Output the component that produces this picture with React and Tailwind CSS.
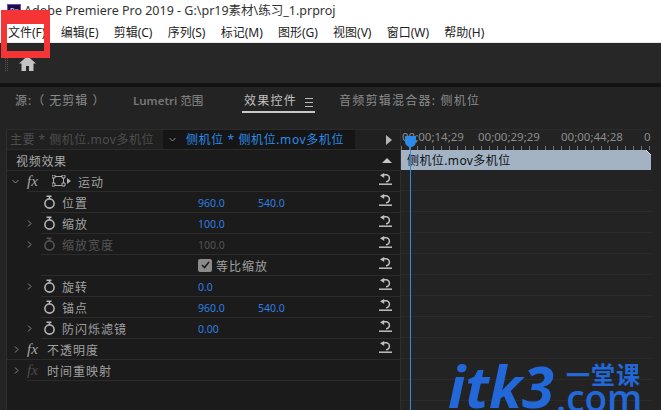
import React from "react";

const menus = ["文件(F)", "编辑(E)", "剪辑(C)", "序列(S)", "标记(M)", "图形(G)", "视图(V)", "窗口(W)", "帮助(H)"];

const Stopwatch = ({ dim }) => (
  <svg width="14" height="15" viewBox="0 0 14 15" fill="none" stroke={dim ? "#555" : "#b4b4b4"} strokeWidth="1.6">
    <circle cx="6.5" cy="8.5" r="4.6" />
    <path d="M3.5 1.2h5M6.5 1.2v2.5" />
  </svg>
);

const Reset = () => (
  <svg width="13" height="12" viewBox="0 0 13 12" fill="none" stroke="#c0c0c0" strokeWidth="1.5" className="mb-[4px] shrink-0">
    <path d="M4.500 1.800H7a3.400 3.400 0 0 1 3.400 3.400A3.400 3.400 0 0 1 7 8.700" />
    <path d="M5.200 0 1 2.300 5.200 5z" fill="#c0c0c0" stroke="none" />
    <path d="M0 11.200h13" />
  </svg>
);

const Chevron = ({ open }) => (
  <svg width="7" height="7" viewBox="0 0 7 7" fill="none" stroke="#8a8a8a" strokeWidth="1">
    {open ? <path d="M.5 2 3.5 5 6.5 2" /> : <path d="M2 .5 5 3.5 2 6.5" />}
  </svg>
);

const Fx = ({ dim }) => (
  <span className={`w-[13px] font-['Liberation_Serif',serif] text-[15px] italic leading-none ${dim ? "text-[#4c4c4c]" : "text-[#a8a8a8]"}`}>fx</span>
);

// one row of the effect list, with its reset button at the right
const Row = ({ line = "ml-[20px]", children, reset = true }) => (
  <div className={`flex h-[21px] items-center border-b border-[#2b2b2b] pr-[8px] ${line}`}>
    <div className="flex min-w-0 flex-1 items-center">{children}</div>
    {reset && <Reset />}
  </div>
);

const Param = ({ name, arrow, values = [], dim, children }) => (
  <Row line="ml-[34px]">
    <div className="ml-[-15px] flex w-[13px] shrink-0">{arrow && <Chevron />}</div>
    <div className="ml-[4px] w-[19px] shrink-0"><Stopwatch dim={dim} /></div>
    <span className={`w-[136px] shrink-0 pt-[3px] tracking-[1px] ${dim ? "text-[#555]" : "text-[#a0a0a0]"}`}>{name}</span>
    {values.map((v) => (
      <span key={v} className={`w-[60px] pt-[3px] text-[10.5px] ${dim ? "text-[#555]" : "text-[#2d7fe0]"}`}>{v}</span>
    ))}
    {children}
  </Row>
);

export default function App() {
  return (
    <div className="relative h-[410px] w-[661px] overflow-hidden bg-[#232323] font-['Noto_Sans','Noto_Sans_CJK_SC',sans-serif] text-[12px]">
      {/* window title */}
      <div className="flex h-[22px] items-center bg-white pl-[7px] text-[12.5px] text-[#333]">
        <div className="flex h-[15px] w-[14px] items-center justify-center border border-[#6d4bc9] bg-[#1d0f3d] text-[8px] font-bold text-[#b79cf5]">Pr</div>
        <span className="ml-[3px]">Adobe Premiere Pro 2019 - G:\pr19素材\练习_1.prproj</span>
      </div>
      {/* menu bar */}
      <div className="flex h-[20px] items-center gap-[15.2px] bg-white pl-[8px] pt-[2px] text-[#222]">
        {menus.map((m) => <span key={m}>{m}</span>)}
      </div>
      <div className="h-[1px] bg-[#e8e8e8]" />

      {/* tool strip */}
      <div className="flex h-[40px] items-center bg-[#272727] pl-[5px]">
        <div className="h-[15px] w-[3px] border-x border-dotted border-[#555]" />
        <svg width="17" height="15" viewBox="0 0 17 15" fill="#c4c4c4" className="ml-[11px]">
          <path d="M8.5 0 17 7.5h-2.5V15H10v-5H7v5H2.500V7.500H0z" />
        </svg>
      </div>
      <div className="h-[4px] bg-[#121212]" />

      {/* tabs */}
      <div className="flex h-[42px] bg-[#232323] pl-[15px] pt-[5px] text-[#8b8b8b]">
        <span className="w-[118px] tracking-[1px]">源:（ 无剪辑 ）</span>
        <span className="w-[109px] whitespace-nowrap text-[11.5px] font-semibold text-[#777]">Lumetri <span className="font-normal text-[#8b8b8b]">范围</span></span>
        <div className="flex h-[21px] w-[97px] items-start">
          <div className="flex h-[21px] w-[73px] items-start gap-[8px] border-b-2 border-[#c8c8c8] pl-[2px] tracking-[1.25px] text-[#c0c0c0]">
            <span className="whitespace-nowrap">效果控件</span>
            <div className="mt-[6px] h-[9px] w-[8px] shrink-0 border-y border-[#bbb] bg-[linear-gradient(#bbb,#bbb)] bg-[length:100%_1px] bg-center bg-no-repeat" />
          </div>
        </div>
        <span className="tracking-[1.25px]">音频剪辑混合器: 侧机位</span>
      </div>

      {/* panels */}
      <div className="flex h-[281px]">
        <div className="ml-[6px] w-[395px] shrink-0 border-x border-[#2e2e2e] bg-[#1b1b1b] text-[#a0a0a0]">
          <div className="flex h-[21px] items-center border-y border-[#2b2b2b] bg-[#202020]">
            <span className="w-[156px] whitespace-nowrap pl-[3px] tracking-[.5px] text-[#4e4e4e]">主要 * 侧机位.mov多机位</span>
            <div className="flex h-full w-[192px] items-center bg-[#151515] text-[#2d8be8]">
              <span className="ml-[6px] w-[17px]"><Chevron open /></span>
              <span className="whitespace-nowrap tracking-[.6px]">侧机位 * 侧机位.mov多机位</span>
            </div>
            <div className="ml-[31px] h-0 w-0 border-y-[5px] border-l-[6px] border-y-transparent border-l-[#b5b5b5]" />
          </div>
          <div className="flex h-[21px] items-center border-b border-[#2b2b2b] pl-[9px] pr-[8px]">
            <span className="flex-1 pt-[3px] tracking-[.7px] text-[#a8a8a8]">视频效果</span>
            <div className="h-0 w-0 border-x-[5px] border-b-[5px] border-x-transparent border-b-[#c4c4c4]" />
          </div>
          <Row>
            <div className="ml-[-15px] w-[15px]"><Chevron open /></div>
            <Fx />
            <svg width="14" height="12" viewBox="0 0 14 12" fill="none" stroke="#b0b0b0" className="ml-[12px]">
              <rect x="1.500" y="1.500" width="10" height="9" />
              <path d="M0 0h3v3H0zM10 0h3v3h-3zM0 8h3v3H0zM10 8h3v3h-3z" fill="#1b1b1b" />
            </svg>
            <div className="ml-[1px] h-0 w-0 border-y-[3.500px] border-l-[4px] border-y-transparent border-l-[#b0b0b0]" />
            <span className="ml-[7px] pt-[3px] tracking-[.9px]">运动</span>
          </Row>
          <Param name="位置" values={["960.0", "540.0"]} />
          <Param name="缩放" arrow values={["100.0"]} />
          <Param name="缩放宽度" arrow dim values={["100.0"]} />
          <Row line="ml-[34px]">
            <div className="ml-[157px] flex h-[13px] w-[14px] items-center justify-center rounded-[2px] bg-[#8a8a8a]">
              <svg width="9" height="8" viewBox="0 0 9 8" fill="none" stroke="#1b1b1b" strokeWidth="1.600"><path d="M1 4l2.500 2.500L8 1" /></svg>
            </div>
            <span className="ml-[4px] pt-[3px] tracking-[1px]">等比缩放</span>
          </Row>
          <Param name="旋转" arrow values={["0.0"]} />
          <Param name="锚点" values={["960.0", "540.0"]} />
          <Param name="防闪烁滤镜" arrow values={["0.00"]} />
          <Row line="ml-0">
            <div className="ml-[6px] w-[14px]"><Chevron /></div>
            <Fx />
            <span className="ml-[7px] pt-[3px] tracking-[1px]">不透明度</span>
          </Row>
          <Row reset={false}>
            <div className="ml-[-14px] w-[14px]"><Chevron /></div>
            <Fx dim />
            <span className="ml-[7px] pt-[3px] tracking-[1px]">时间重映射</span>
          </Row>
        </div>

        {/* timeline */}
        <div className="w-[250px] shrink-0 bg-[#232323]">
          <div className="h-[21px] border-t border-[#2b2b2b]">
            <div className="flex h-[13px] whitespace-nowrap text-[11.5px] leading-[13px] text-[#8c8c8c]">
              <span className="w-[77px] pl-[1px]">00;00;14;29</span>
              <span className="w-[83px]">00;00;29;29</span>
              <span className="w-[83px]">00;00;44;28</span>
              <span>0</span>
            </div>
            <div className="mt-[3px] h-[4px] bg-[repeating-linear-gradient(90deg,#777_0,#777_1px,transparent_1px,transparent_8px)]" />
          </div>
          <div className="flex h-[20px] items-start justify-between bg-[#a3b3c3] pl-[6px] pt-[2px] tracking-[.4px] text-[#111]">
            <span>侧机位.mov多机位</span>
            <svg width="5" height="5" viewBox="0 0 5 5" className="mt-[-2px]"><path d="M0 0h5v5z" fill="#232323" /><path d="M0 0l5 5" stroke="#ddd" /></svg>
          </div>
          {[0, 1, 2, 3, 4, 5, 6, 7, 8, 9, 10, 11].map((i) => (
            <div key={i} className="h-[21px] border-b border-[#2b2b2b]" />
          ))}
        </div>
      </div>

      {/* playhead */}
      <div className="absolute left-[410px] top-[145px] h-[265px] w-[1px] bg-[#2d8be8]" />
      <div className="absolute left-[405px] top-[136px] h-[11px] w-[11px] rounded-b-full bg-[#2d8be8]" />

      {/* red callout */}
      <div className="absolute left-[1px] top-[10px] h-[48px] w-[49px] border-x-[6px] border-b-[7px] border-t-[14px] border-[#f53535]" />

      {/* watermark */}
      <div className="absolute left-[448px] top-[362px] flex items-start text-[#2268d8]">
        <span className="w-[108px] font-['Open_Sans',sans-serif] text-[58px] font-bold italic leading-[48px]">itk3</span>
        <div className="mt-[1px] flex flex-col">
          <span className="ml-[10px] text-[24px] font-bold leading-[24px] tracking-[1px]">一堂课</span>
          <span className="font-['Open_Sans',sans-serif] text-[37px] font-semibold leading-[22px]">.com</span>
        </div>
      </div>
    </div>
  );
}
